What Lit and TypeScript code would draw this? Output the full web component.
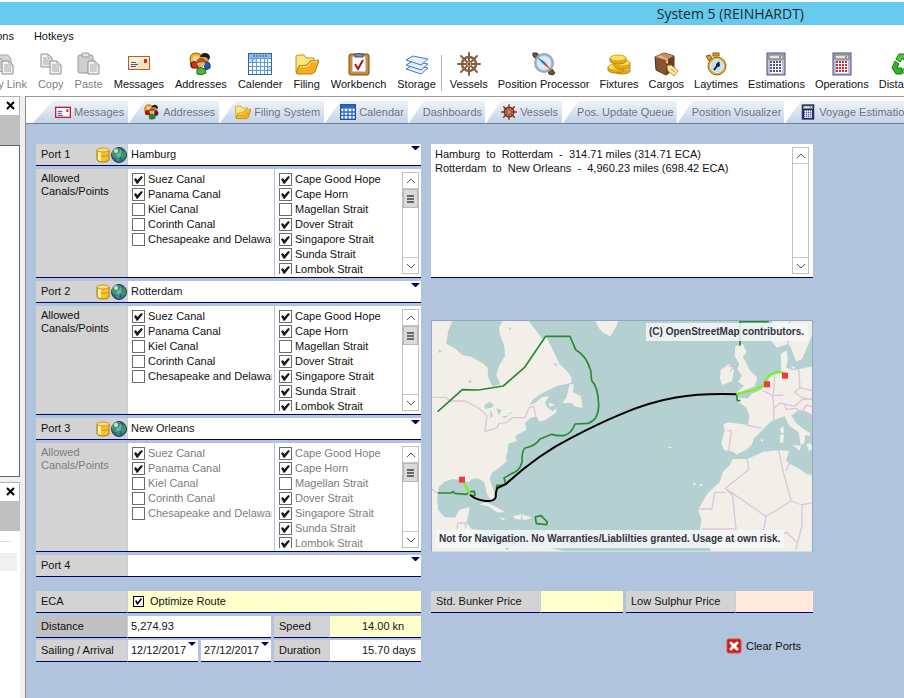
import { LitElement, html, svg, css } from "lit";
import { customElement, property, state } from "lit/decorators.js";
import { classMap } from "lit/directives/class-map.js";

const icon = (body: unknown, size = 24, box = 24) =>
  html`<svg class="ico" width=${size} height=${size} viewBox="0 0 ${box} ${box}" aria-hidden="true">${body}</svg>`;

const sheet = (x: number, y: number) => svg`
  <path d="M${x} ${y}h7l4 4v9h-11z" fill="#f2f2f2" stroke="#8e8e8e"/>
  <path d="M${x + 7} ${y}v4h4M${x + 2} ${y + 4}h4M${x + 2} ${y + 6}h7M${x + 2} ${y + 8}h7M${x + 2} ${y + 10}h7" fill="none" stroke="#a8a8a8"/>`;

const envelope = svg`
  <rect x="1.500" y="4.500" width="21" height="13" fill="#fdf0d8" stroke="#a8642a"/>
  <path d="M2 17V13L22 6V17z" fill="#f8d9ae" opacity=".7"/>
  <path d="M4 10.500h5M4 12.500h7M4 14.500h5" stroke="#3b62b0"/>
  <rect x="17" y="7" width="3" height="4" fill="#d8261c"/>`;

const wheel = (c: string, hub: string) => svg`
  <g stroke=${c} stroke-width="2" fill="none" stroke-linecap="round">
    <path d="M12 1v22M1 12h22M4 4l16 16M20 4L4 20"/>
    <circle cx="12" cy="12" r="7" stroke-width="2.500"/>
  </g>
  <circle cx="12" cy="12" r="3" fill=${hub} stroke=${c}/>
  <circle cx="12" cy="12" r="1" fill="#3d2616"/>`;

const folder = svg`
  <path d="M1 20V4l2-1h6l2 3h8v6" fill="#fbe680" stroke="#c09424"/>
  <path d="M1 21L4 14l8-1 3-4 9-1-4 12-3 2H3z" fill="#f3b01c" stroke="#b07a12"/>
  <path d="M5 15l8-1 3-4 6-1" fill="none" stroke="#fde79a"/>`;

const people = (a: string, b: string, c: string) => svg`
  <path d="M1 6q1-5 6-5t6 5l-1 9H2z" fill="#f3b52a" stroke="#8c5a10"/>
  <circle cx="7" cy="7" r="3" fill="#f9d6a0"/>
  <path d="M2 11q3-3 7 0v5H3z" fill=${a} stroke="#6b1010"/>
  <circle cx="16" cy="7" r="4" fill="#d99a55"/>
  <path d="M11 5q1-4 5-4t5 4l-1 3-3-3z" fill="#1a1a1a"/>
  <path d="M14 11q5-3 7 1v4l-4 2z" fill=${b} stroke="#14306b"/>
  <circle cx="12" cy="11" r="4" fill="#e9b27a"/>
  <path d="M7 12q0-6 5-6t5 6l-3-2-5 1z" fill="#a8581c"/>
  <path d="M8 17q4-3 8 0l1 4q-4 3-9 1z" fill=${c} stroke="#1d6b1d"/>`;

const calendar = svg`
  <rect x="0.500" y="1.500" width="23" height="21" fill="#fff" stroke="#2c66a8"/>
  <rect x="1" y="2" width="22" height="4" fill="#8fbcec"/>
  <path d="M5 4h14" stroke="#1f4e94" stroke-dasharray="2 1"/>
  <path d="M1 6h8v4H1zM19 14h4v4h-4z" fill="#bcd9f6"/>
  <path d="M1 6.500h22M1 10.500h22M1 14.500h22M1 18.500h22M4.500 6v16M8.500 6v16M12.500 6v16M16.500 6v16M19.500 6v16" stroke="#5f9ad8"/>`;

const calc = (body: string, key: string) => svg`
  <rect x="3" y="1" width="18" height="22" fill=${body} stroke="#4a4f78"/>
  <rect x="5" y="3" width="14" height="4" fill="#e9e7c8" stroke="#6a6f80"/>
  <path d="M16 4v2" stroke="#333"/>
  <rect x="6" y="9" width="12" height="12" fill="#fff"/>
  <g fill=${key}>
    ${[9, 12, 15, 18].map((y) => [6, 9, 12, 15].map((x) => svg`<rect x=${x} y=${y} width="2" height="2"/>`))}
  </g>`;

const coin = (x: number, y: number) => svg`
  <path d="M${x} ${y}v3a8 3 0 0 0 16 0v-3z" fill="#e8aa14" stroke="#b8860f"/>
  <ellipse cx=${x + 8} cy=${y} rx="8" ry="3" fill="#fde25c" stroke="#d8a41a"/>`;

const art: Record<string, unknown> = {
  link: svg`<path d="M4 3h14l3 4v12H4z" fill="#d4d4d4" stroke="#aaa"/>${sheet(3, 6)}${sheet(12, 9)}`,
  copy: svg`${sheet(2, 2)}${sheet(11, 9)}`,
  paste: svg`
    <rect x="1" y="3" width="15" height="18" rx="2" fill="#cfcfcf" stroke="#999"/>
    <rect x="5" y="1" width="7" height="4" rx="1" fill="#e4e4e4" stroke="#999"/>${sheet(11, 9)}`,
  messages: envelope,
  addresses: people("#d82a1c", "#2456b8", "#4fb83a"),
  calender: calendar,
  filing: folder,
  workbench: svg`
    <rect x="2" y="2" width="20" height="21" rx="2" fill="#d98c1a" stroke="#7a4a08"/>
    <rect x="5" y="4" width="14" height="16" fill="#fff" stroke="#8a94b8"/>
    <path d="M8 5V2h3l1-1 1 1h3v3z" fill="#8b94b5" stroke="#3e4668"/>
    <path d="M8 12l3 5 5-9" fill="none" stroke="#b5121a" stroke-width="2"/>`,
  storage: svg`<g fill="#e6f0fc" stroke="#4a78c8">
    <path d="M1 17l7-4 15 3-7 6z"/><path d="M1 13l7-4 15 3-7 6z"/><path d="M1 8l7-4 15 3-7 6z"/></g>`,
  vessels: wheel("#8a5f40", "#c9a27c"),
  position: svg`
    <path d="M1 1h4l3 4-3 3-4-4zM16 18l4-1 3 4-2 2-4-1z" fill="#7a5030" stroke="#4a2c14"/>
    <circle cx="12" cy="11" r="9" fill="#a9c6dc" stroke="#9aa9b8" stroke-width="2"/>
    <circle cx="12" cy="11" r="7" fill="#d6ebf8"/>
    <path d="M5 5l8 5-2 2z" fill="#1f7ac0"/><path d="M19 18l-8-6 2-2z" fill="#d8481c"/>`,
  fixtures: svg`${coin(7, 16)}${coin(1, 15)}${coin(7, 11)}${coin(3, 6)}`,
  cargos: svg`
    <path d="M1 5l9-4 10 3v13l-8 6-10-5z" fill="#8a5430" stroke="#4e2c14"/>
    <path d="M1 5l9-4 10 3-8 4z" fill="#c58f60"/><path d="M12 8l8-4v13l-8 6z" fill="#6b3e20"/>
    <path d="M5 3l9 4v5l-2-1V8L4 5z" fill="#e2b988"/>
    <path d="M13 14l4-1 7 6-4 5-6-5z" fill="#fbe9a8" stroke="#b8903a"/><path d="M17 17l4 3" stroke="#b8903a"/>`,
  laytimes: svg`
    <rect x="9" y="1" width="6" height="3" fill="#d8a02a" stroke="#8a5c0c"/>
    <path d="M2 4l4-1 2 3-3 3z" fill="#d8a02a" stroke="#8a5c0c"/>
    <circle cx="13" cy="14" r="9" fill="#e0aa38" stroke="#9a6c14"/>
    <circle cx="13" cy="14" r="6.500" fill="#bfe0f8" stroke="#e8f4fc"/>
    <path d="M10 18l3-4M13 14l2-4" stroke="#123" stroke-width="2"/><circle cx="14" cy="13" r="2" fill="#123"/>`,
  estimations: calc("#b9bdd8", "#4a5488"),
  operations: calc("#b9bdd8", "#d8283c"),
  distances: svg`
    <path d="M8 2h8l3 6-5 2-2-4-3 4-4-3z" fill="#4fc83a" stroke="#1c7a18"/>
    <path d="M4 9l4 3-2 4h5v6H5l-4-6z" fill="#35b028" stroke="#1c7a18"/>
    <path d="M18 10l5 6-3 6h-5v2l-4-5 4-5v3h3l-2-4z" fill="#6fdc58" stroke="#1c7a18"/>`,
  tabMessages: svg`
    <rect x="1" y="5" width="22" height="15" fill="#fff" stroke="#c0202a" stroke-width="2"/>
    <path d="M4 11h7M4 14h6M4 17h8" stroke="#2848a8" stroke-width="1.500"/><rect x="17" y="8" width="3" height="4" fill="#d8261c"/>`,
  tabAddresses: people("#b80f0f", "#7a1212", "#1f8a2c"),
  tabCalendar: svg`
    <rect x="1" y="1" width="22" height="22" fill="#fff" stroke="#1c4e9c" stroke-width="2"/>
    <rect x="1" y="1" width="22" height="6" fill="#2c68c0"/>
    <path d="M1 12h22M1 17h22M6 7v16M12 7v16M18 7v16" stroke="#2c68c0" stroke-width="2"/>`,
  tabVessels: wheel("#8a2c10", "#f8d8a0"),
  tabCalc: calc("#1a2468", "#4a58b0"),
};

const database = icon(svg`
  <path d="M2 3v10q1 2 6 2t6-2V3z" fill="#f6c22c" stroke="#a87c10"/>
  <path d="M3 4h3v10l-3-1z" fill="#fff0a8"/>
  <ellipse cx="8" cy="3" rx="6" ry="2" fill="#fde27a" stroke="#c89a20"/>
  <path d="M6 9q4 1 8-1" fill="none" stroke="#c89418"/>`, 16, 16);

const globe = icon(svg`
  <circle cx="8" cy="8" r="7.500" fill="#2c5f9c" stroke="#2a3f5c"/>
  <circle cx="6" cy="6" r="5" fill="#6fa8dc"/>
  <path d="M1 7q1-5 6-6l3 1-2 4-3 1 1 3-3 1zM10 5l4-1 1 5-3 4-2-3z" fill="#3c9a48"/>
  <path d="M6 10l3 1-1 4-3-2z" fill="#3c9a48"/>
  <circle cx="5" cy="4" r="2" fill="#e8f6ff" opacity=".8"/>`, 16, 16);

type Tool = [string, string, boolean?];
const general: Tool[] = [
  ["Copy Link", "link", true], ["Copy", "copy", true], ["Paste", "paste", true],
  ["Messages", "messages"], ["Addresses", "addresses"], ["Calender", "calender"],
  ["Filing", "filing"], ["Workbench", "workbench"], ["Storage", "storage"],
];
const shipping: Tool[] = [
  ["Vessels", "vessels"], ["Position Processor", "position"], ["Fixtures", "fixtures"],
  ["Cargos", "cargos"], ["Laytimes", "laytimes"], ["Estimations", "estimations"],
  ["Operations", "operations"], ["Distances", "distances"],
];

const tabs: [string, string?][] = [
  ["Messages", "tabMessages"], ["Addresses", "tabAddresses"], ["Filing System", "filing"],
  ["Calendar", "tabCalendar"], ["Dashboards"], ["Vessels", "tabVessels"],
  ["Pos. Update Queue"], ["Position Visualizer"], ["Voyage Estimations", "tabCalc"],
];

const canals: [string, boolean][] = [
  ["Suez Canal", true], ["Panama Canal", true], ["Kiel Canal", false],
  ["Corinth Canal", false], ["Chesapeake and Delaware", false],
];
const straits: [string, boolean][] = [
  ["Cape Good Hope", true], ["Cape Horn", true], ["Magellan Strait", false], ["Dover Strait", true],
  ["Singapore Strait", true], ["Sunda Strait", true], ["Lombok Strait", true],
];

const base = css`
  * { box-sizing: border-box; }
  button, input, select, textarea {
    font: inherit; color: inherit; margin: 0; padding: 0; border: 0; border-radius: 0;
    background: none; outline: none; appearance: none;
  }
  .ico { display: block; flex: none; }
`;

@customElement("side-scroll")
class SideScroll extends LitElement {
  @property({ type: Boolean, reflect: true }) thumb = false;

  static styles = [base, css`
    :host { display: flex; flex-direction: column; flex: none; width: 17px; border: 1px solid #c0c0c0; background: #fff; }
    .arrow { height: 16px; display: grid; place-items: center; flex: none; }
    .up { border-bottom: 1px solid #c8c8c8; }
    .down { border-top: 1px solid #c8c8c8; margin-top: auto; }
    .grip {
      height: 19px; background: #dadada; border: 1px solid #b8b8b8;
      display: grid; place-items: center; flex: none;
    }
  `];

  render() {
    return html`
      <button class="arrow up" aria-label="Scroll up">
        <svg width="8" height="6" viewBox="0 0 8 6"><path d="M0 5l4-4 4 4" fill="none" stroke="#555"/></svg>
      </button>
      ${this.thumb
        ? html`<div class="grip"><svg width="7" height="8" viewBox="0 0 7 8"><path d="M0 1h7M0 4h7M0 7h7" stroke="#666" stroke-width="2"/></svg></div>`
        : ""}
      <button class="arrow down" aria-label="Scroll down">
        <svg width="8" height="6" viewBox="0 0 8 6"><path d="M0 1l4 4 4-4" fill="none" stroke="#555"/></svg>
      </button>`;
  }
}

@customElement("route-map")
class RouteMap extends LitElement {
  static styles = [base, css`
    :host { display: block; position: relative; height: 232px; border: 1px solid #93a6bd; border-bottom-color: #d4dde6; background: #b5d0d0; overflow: hidden; }
    .chart { display: block; width: 100%; height: 100%; }
    .land { fill: #f2efe9; }
    .sea { fill: #b5d0d0; }
    .frontier { fill: none; stroke: #dcc6da; stroke-width: 4; stroke-linejoin: round; }
    .eca { fill: none; stroke: #2a8a34; stroke-width: 5; stroke-linejoin: round; }
    .track { fill: none; stroke: #000; stroke-width: 6; }
    .leg { fill: none; stroke: #80f020; stroke-width: 7; }
    .port { fill: #f0393c; }
    .note {
      position: absolute; padding: 0 4px 0 3px; white-space: nowrap;
      font: 700 10px/18px "Liberation Sans", Arial, sans-serif; color: #334; background: rgba(245, 248, 248, 0.85);
    }
    .credit { top: 2px; right: 4px; }
    .warning { bottom: 3px; left: 4px; }
  `];

  render() {
    return html`
      <svg class="chart" viewBox="21 16 1140 690" preserveAspectRatio="xMidYMid slice" role="img" aria-label="Route map">
        <path class="land" d="M18 10H84L70 45L64 84L92 100L112 118L140 124L172 142L188 156L190 186L202 212L226 206L214 178L222 150L240 122L238 90L226 62L222 35L236 10H306L330 40L352 70L364 62L374 84L388 112L404 146L424 164L440 186L438 202L398 210L372 222L348 234L326 250L312 268L330 262L352 244L372 242L360 262L368 276L382 286L396 278L392 292L362 312L344 318L334 302L316 306L300 322L304 342L270 362L276 376L250 384L248 408L242 424L246 436L222 456L200 472L194 490L204 520L210 544L200 556L186 536L178 500L160 488L140 490L132 500L108 494L84 490L58 498L42 514L36 548L40 584L58 604L90 606L104 582L134 574L130 598L124 622L140 640L168 644L172 672L196 694L236 690L250 711H18z"/>
        <path class="land" d="M236 711L262 690L300 696L342 690L392 700L430 711zM162 566L182 560L214 574L240 590L216 590L190 572zM264 602L290 596L322 606L304 612L270 610zM222 606l20 2-8 6zM412 262L424 246L434 206L446 206L444 230L468 242L472 276L448 272L440 262zM508 10H582L574 32L556 62L536 52L522 38zM368 262l22 4-14 8z"/>
        <path class="sea" d="M250 34l10 4-6 6zM130 200l6-10 4 12zM178 268l16-10 14 12-10 6-18 4zM196 280l8 22-8 4zM214 278l16 6-8 14zM230 304l22-6-14 10zM250 292l14-2-10 6zM386 142l12 4-8 6zM40 100l10 6-8 6z"/>
        <path class="frontier" d="M20 245H62L78 256H120L160 276L186 300L180 348L216 336L222 324L246 320L262 306H300L312 276L326 272L332 300M96 640L98 622H122V638M290 598V612M20 520L36 532"/>
        <g transform="translate(585 0)">
          <path class="land" d="M346 92L368 84L380 108L368 124L376 136L388 162L412 186L404 212L362 228L348 232L372 210L354 198L366 180L352 160L358 144L344 122zM302 162L328 144L342 164L336 196L306 208L300 186zM458 10L452 74L470 96L506 84L516 104L528 138L546 130L556 108L566 84L579 50V10z"/>
          <path class="land" d="M482 114L500 104L504 128L498 156L520 164L579 152V298L560 288L536 282L514 300L528 322L548 338L570 352V362L556 358L552 384L542 388L536 350L508 330L494 302L470 310L452 318L438 332L424 346L402 368L396 386L380 402L350 416L334 406L312 404L304 382L314 346L310 326L324 320L384 328L388 300L380 276L350 256L352 246L384 248L396 234L424 222L442 204L450 180L476 174L484 158z"/>
          <path class="land" d="M338 430L382 430L430 408L476 404L508 406L498 434L508 444L536 458L558 474L579 478V711H274L262 672L240 640L244 610L234 582L262 534L300 498L308 470L330 448zM480 338l10-6 2 18-8 4zM480 358l12-2-2 26-10-2zM518 388l24 2-2 16zM420 374l10-4-2 8zM560 386l12-4 6 18-12 6zM512 152l14 2-4 8zM142 392l16 4-10 2zM218 500l12 6-8 4zM236 510l8-6 4 6z"/>
          <path class="frontier" d="M322 344L334 346L326 404M380 328L424 338M460 320L462 278L458 240L428 224M464 178L460 240L490 238M462 278L480 262L524 272L546 252L579 248M536 160L540 216L524 230L546 246L579 252M540 216L579 226M496 282L530 278L540 294L560 268L579 274M490 262L500 282M510 12V60L502 84M552 284L579 320M326 150l14 4-8 12M382 430L386 462L316 518L438 602L514 556L490 470L476 404M514 556L546 568L579 560M546 568V630L528 700M438 602L432 640L400 662L360 690M338 540L348 640H246M316 530H284L276 580H234M338 540L316 518M470 660L500 650L530 680M498 466L508 444"/>
          <path class="eca" d="M446 18H360V90M350 236L352 255H361"/>
        </g>
        <path class="eca" d="M38 288L112 222L160 223L235 211L298 156L362 62H435L452 102Q486 122 497 165L500 195Q520 214 521 270Q520 312 490 323L450 325Q440 352 420 359Q400 362 380 356L345 370Q330 392 300 397Q290 406 291 440Q284 466 262 473L237 487L242 503L238 509L216 509L214 516M38 532H78L84 528L90 533L124 536L136 528L148 527L150 538L138 542M331 604L348 600L367 619L365 627L334 624z"/>
        <path class="track" d="M135 537Q150 552 182 556Q206 558 212 545Q212 530 216 518L243 505Q340 416 440 366Q520 324 585 297C700 246 800 231 936 236"/>
        <path class="leg" d="M114 496L135 535M934 236L990 222L1015 210L1026 186Q1044 170 1064 168L1078 174"/>
        <rect class="port" x="102" y="483" width="18" height="18"/>
        <rect class="port" x="1017" y="197" width="18" height="18"/>
        <rect class="port" x="1071" y="171" width="18" height="18"/>
      </svg>
      <div class="note credit">(C) OpenStreetMap contributors.</div>
      <div class="note warning">Not for Navigation. No Warranties/Liablilties granted. Usage at own risk.</div>`;
  }
}

@customElement("port-block")
class PortBlock extends LitElement {
  @property({ type: Number }) number = 1;
  @property() port = "";
  @property({ type: Boolean }) locked = false;
  @property({ type: Boolean }) empty = false;

  static styles = [base, css`
    :host { display: flex; flex-direction: column; gap: 3px; }
    .row {
      display: grid; grid-template-columns: 92px minmax(0, 1fr); grid-template-rows: minmax(0, 1fr);
      border-bottom: 1px solid #00006a;
    }
    .head { height: 22px; }
    .name { background: #d3d3d3; display: flex; align-items: center; padding-left: 5px; border-right: 1px solid #c3cede; }
    .icons { display: flex; margin-left: auto; }
    .pick { background: #fff; position: relative; display: flex; }
    .pick select { flex: 1; padding-left: 3px; }
    .tip { position: absolute; right: 1px; top: 2px; pointer-events: none; }
    .points { height: 109px; }
    .title { background: #d3d3d3; padding: 3px 5px; line-height: 13px; border-right: 1px solid #c3cede; }
    .lists {
      display: grid; grid-template-columns: 146fr 147fr; grid-template-rows: minmax(0, 1fr);
      min-width: 0; background: #fff;
    }
    .list { display: flex; min-width: 0; overflow: hidden; padding: 3px 2px 3px 4px; }
    .second { border-left: 1px solid #b0c4de; }
    .items { flex: 1; min-width: 0; overflow: hidden; }
    .item { display: flex; align-items: center; height: 15px; gap: 3px; white-space: nowrap; }
    .item input {
      width: 13px; height: 13px; flex: none; border: 1px solid #6c6c6c; background: #fff; display: grid; place-items: center;
    }
    .item input:checked::before {
      content: ""; width: 9px; height: 9px; background: #1c1c1c;
      clip-path: polygon(0 48%, 20% 34%, 38% 56%, 80% 10%, 100% 22%, 42% 98%, 28% 98%);
    }
    .locked { color: #7d7d7d; }
  `];

  private item([name, on]: [string, boolean]) {
    return html`<label class="item"><input type="checkbox" .checked=${on} ?disabled=${this.locked}>${name}</label>`;
  }

  render() {
    return html`
      <div class="row head">
        <label class="name" for="port">Port ${this.number}
          ${this.empty ? "" : html`<span class="icons">${database}${globe}</span>`}
        </label>
        <div class="pick">
          <select id="port"><option>${this.port}</option></select>
          <svg class="tip" width="9" height="5" viewBox="0 0 9 5"><path d="M0 0h9L5 4H4z" fill="#00006a"/></svg>
        </div>
      </div>
      ${this.empty ? "" : html`
        <div class=${classMap({ row: true, points: true, locked: this.locked })}>
          <div class="title">Allowed<br>Canals/Points</div>
          <div class="lists">
            <div class="list"><div class="items">${canals.map((c) => this.item(c))}</div></div>
            <div class="list second">
              <div class="items">${straits.map((c) => this.item(c))}</div>
              <side-scroll thumb></side-scroll>
            </div>
          </div>
        </div>`}`;
  }
}

@customElement("app-root")
class AppRoot extends LitElement {
  @state() private optimize = true;

  static styles = [base, css`
    :host {
      display: flex; flex-direction: column; min-height: 100vh; overflow: hidden; background: #fff;
      font: 11px/13px "Liberation Sans", Arial, sans-serif; color: #111;
    }
    .titlebar {
      margin-top: 2px; height: 23px; background: #67c9eb; padding-right: 100px; text-align: right;
      font: 14px/23px "Open Sans", "Noto Sans", sans-serif; color: #1c2b33;
    }
    .menu { display: flex; gap: 20px; height: 22px; align-items: center; margin-left: -24px; }
    .tools { display: flex; height: 49px; padding-top: 5px; margin-left: -22px; }
    .group { display: flex; gap: 11px; flex: none; }
    .tight { gap: 10px; }
    .tool { display: flex; flex-direction: column; align-items: center; gap: 2px; white-space: nowrap; flex: none; height: 40px; }
    .tool:disabled { color: #808080; }
    .rule { width: 1px; height: 36px; background: #b4b4b4; margin: 3px 8px 0 5px; flex: none; }
    .body { flex: 1; display: grid; grid-template-columns: 26px minmax(0, 1fr); }
    .side { background: #f0f0f0; border-right: 1px solid #8c8c8c; padding-right: 5px; display: flex; flex-direction: column; }
    .bar { height: 19px; background: #fff; border: solid #b0b0b0; border-width: 1px 1px 0 0; display: flex; justify-content: flex-end; align-items: center; padding-right: 4px; }
    .band { height: 30px; background: #c0c0c0; }
    .box { height: 332px; background: #fff; border: 1px solid #666; border-left: 0; margin-bottom: 5px; }
    .rest { flex: 1; background: #fff; display: flex; flex-direction: column; padding: 10px 3px 0 0; gap: 11px; }
    .thin { height: 1px; width: 11px; background: #d5dfe8; }
    .patch { height: 18px; background: #f0f0f0; }
    .main { background: #b0c4de; min-width: 0; }
    .tabs { display: flex; gap: 1px; height: 28px; padding: 4px 0 0 7px; background: #fff; border-top: 1px solid #999; border-bottom: 1px solid #75818f; overflow: hidden; }
    .tab {
      display: flex; align-items: center; gap: 3px; padding: 0 4px 0 15px; flex: none; white-space: nowrap; color: #6f747c;
      background: linear-gradient(#eef3f9, #c4d3e7);
      clip-path: polygon(16px 0, 100% 0, 100% 100%, 0 100%, 13px 3px);
    }
    .plain { padding: 0 3px 0 14px; }
    .tab:first-child { padding-left: 22px; clip-path: polygon(22px 0, 100% 0, 100% 100%, 0 100%, 18px 2px); }
    .page { display: grid; grid-template-columns: minmax(0, 385fr) minmax(0, 382fr); gap: 10px; padding: 20px 91px 20px 10px; }
    .column { display: flex; flex-direction: column; }
    .ports { display: flex; flex-direction: column; gap: 3px; margin-bottom: 14px; }
    .cell { height: 22px; display: flex; align-items: center; border-bottom: 1px solid #00006a; min-width: 0; background: #fff; position: relative; }
    .tag { background: #d3d3d3; padding-left: 5px; border-right: 1px solid #c3cede; white-space: nowrap; }
    .dark { background: #c0c0c0; }
    .cream { background: #ffffcc; }
    .pink { background: #ffe8dc; }
    .cell input:not([type]) { width: 100%; padding-left: 3px; }
    .cell.unit input:not([type]) { padding-left: 32px; }
    .eca { display: grid; grid-template-columns: 92px 1fr; margin-bottom: 3px; }
    .opt { display: flex; align-items: center; gap: 6px; padding-left: 5px; }
    .opt input { width: 11px; height: 11px; border: 1px solid #000; background: #fff; display: grid; place-items: center; }
    .opt input:checked::before {
      content: ""; width: 7px; height: 7px; background: #000;
      clip-path: polygon(0 40%, 22% 32%, 38% 60%, 86% 0, 100% 14%, 42% 98%, 28% 98%);
    }
    .totals { display: grid; grid-template-columns: 92px 146fr 56px 91fr; row-gap: 2px; }
    .gap { margin-right: 3px; }
    .dates { display: grid; grid-template-columns: 1fr 1fr; gap: 3px; margin-right: 3px; }
    .tip { position: absolute; right: 2px; top: 2px; }
    .log { display: flex; height: 134px; background: #fff; border-bottom: 1px solid #00006a; padding: 3px 4px 3px 4px; margin-bottom: 42px; }
    .log textarea { flex: 1; resize: none; overflow: hidden; line-height: 14px; white-space: pre; }
    .prices { display: grid; grid-template-columns: 110px 82fr 3px 110px 77fr; margin-top: 39px; }
    .clear { display: flex; align-items: center; gap: 4px; align-self: flex-end; margin: 25px 12px 0 0; }
  `];

  private tool([name, key, off]: Tool) {
    return html`<button class="tool" ?disabled=${off}>${icon(art[key])}${name}</button>`;
  }

  render() {
    const tip = html`<svg class="tip" width="8" height="4" viewBox="0 0 8 4"><path d="M0 0h8L4 4z" fill="#00006a"/></svg>`;
    const cross = html`<svg width="9" height="9" viewBox="0 0 9 9"><path d="M1 1l7 7M8 1l-7 7" stroke="#000" stroke-width="2"/></svg>`;
    return html`
      <header class="titlebar">System 5 (REINHARDT)</header>
      <nav class="menu"><button>Options</button><button>Hotkeys</button></nav>
      <div class="tools" role="toolbar">
        <div class="group">${general.map((t) => this.tool(t))}</div>
        <span class="rule"></span>
        <div class="group tight">${shipping.map((t) => this.tool(t))}</div>
      </div>
      <div class="body">
        <aside class="side">
          <div class="bar"><button aria-label="Close panel">${cross}</button></div>
          <div class="band"></div>
          <div class="box"></div>
          <div class="bar"><button aria-label="Close panel">${cross}</button></div>
          <div class="band"></div>
          <div class="rest"><div class="thin"></div><div class="patch"></div></div>
        </aside>
        <main class="main">
          <nav class="tabs">
            ${tabs.map(([name, key]) => html`
              <button class=${classMap({ tab: true, plain: !key })}>${key ? icon(art[key], 16) : ""}${name}</button>`)}
          </nav>
          <div class="page">
            <section class="column">
              <div class="ports">
                <port-block .number=${1} port="Hamburg"></port-block>
                <port-block .number=${2} port="Rotterdam"></port-block>
                <port-block .number=${3} port="New Orleans" locked></port-block>
                <port-block .number=${4} empty></port-block>
              </div>
              <div class="eca">
                <div class="cell tag">ECA</div>
                <label class="cell cream opt">
                  <input type="checkbox" .checked=${this.optimize}
                    @change=${(e: Event) => (this.optimize = (e.target as HTMLInputElement).checked)}>Optimize Route
                </label>
              </div>
              <div class="totals">
                <label class="cell tag dark" for="distance">Distance</label>
                <div class="cell gap"><input id="distance" value="5,274.93"></div>
                <label class="cell tag" for="speed">Speed</label>
                <div class="cell cream unit"><input id="speed" value="14.00 kn"></div>
                <label class="cell tag" for="sailing">Sailing / Arrival</label>
                <div class="dates">
                  <div class="cell"><input id="sailing" value="12/12/2017">${tip}</div>
                  <div class="cell"><input aria-label="Arrival" value="27/12/2017">${tip}</div>
                </div>
                <label class="cell tag" for="duration">Duration</label>
                <div class="cell unit"><input id="duration" value="15.70 days"></div>
              </div>
            </section>
            <section class="column">
              <div class="log">
                <textarea readonly aria-label="Legs" .value=${"Hamburg  to  Rotterdam  -  314.71 miles (314.71 ECA)\nRotterdam  to  New Orleans  -  4,960.23 miles (698.42 ECA)"}></textarea>
                <side-scroll></side-scroll>
              </div>
              <route-map></route-map>
              <div class="prices">
                <label class="cell tag" for="bunker">Std. Bunker Price</label>
                <div class="cell cream"><input id="bunker"></div>
                <span></span>
                <label class="cell tag" for="sulphur">Low Sulphur Price</label>
                <div class="cell pink"><input id="sulphur"></div>
              </div>
              <button class="clear">
                ${icon(svg`
                  <rect x="1" y="1" width="14" height="14" rx="2" fill="#c8201c" stroke="#e04a3c"/>
                  <path d="M5 5l6 6M11 5l-6 6" stroke="#fff" stroke-width="3" stroke-linecap="round"/>`, 16, 16)}
                Clear Ports
              </button>
            </section>
          </div>
        </main>
      </div>`;
  }
}
